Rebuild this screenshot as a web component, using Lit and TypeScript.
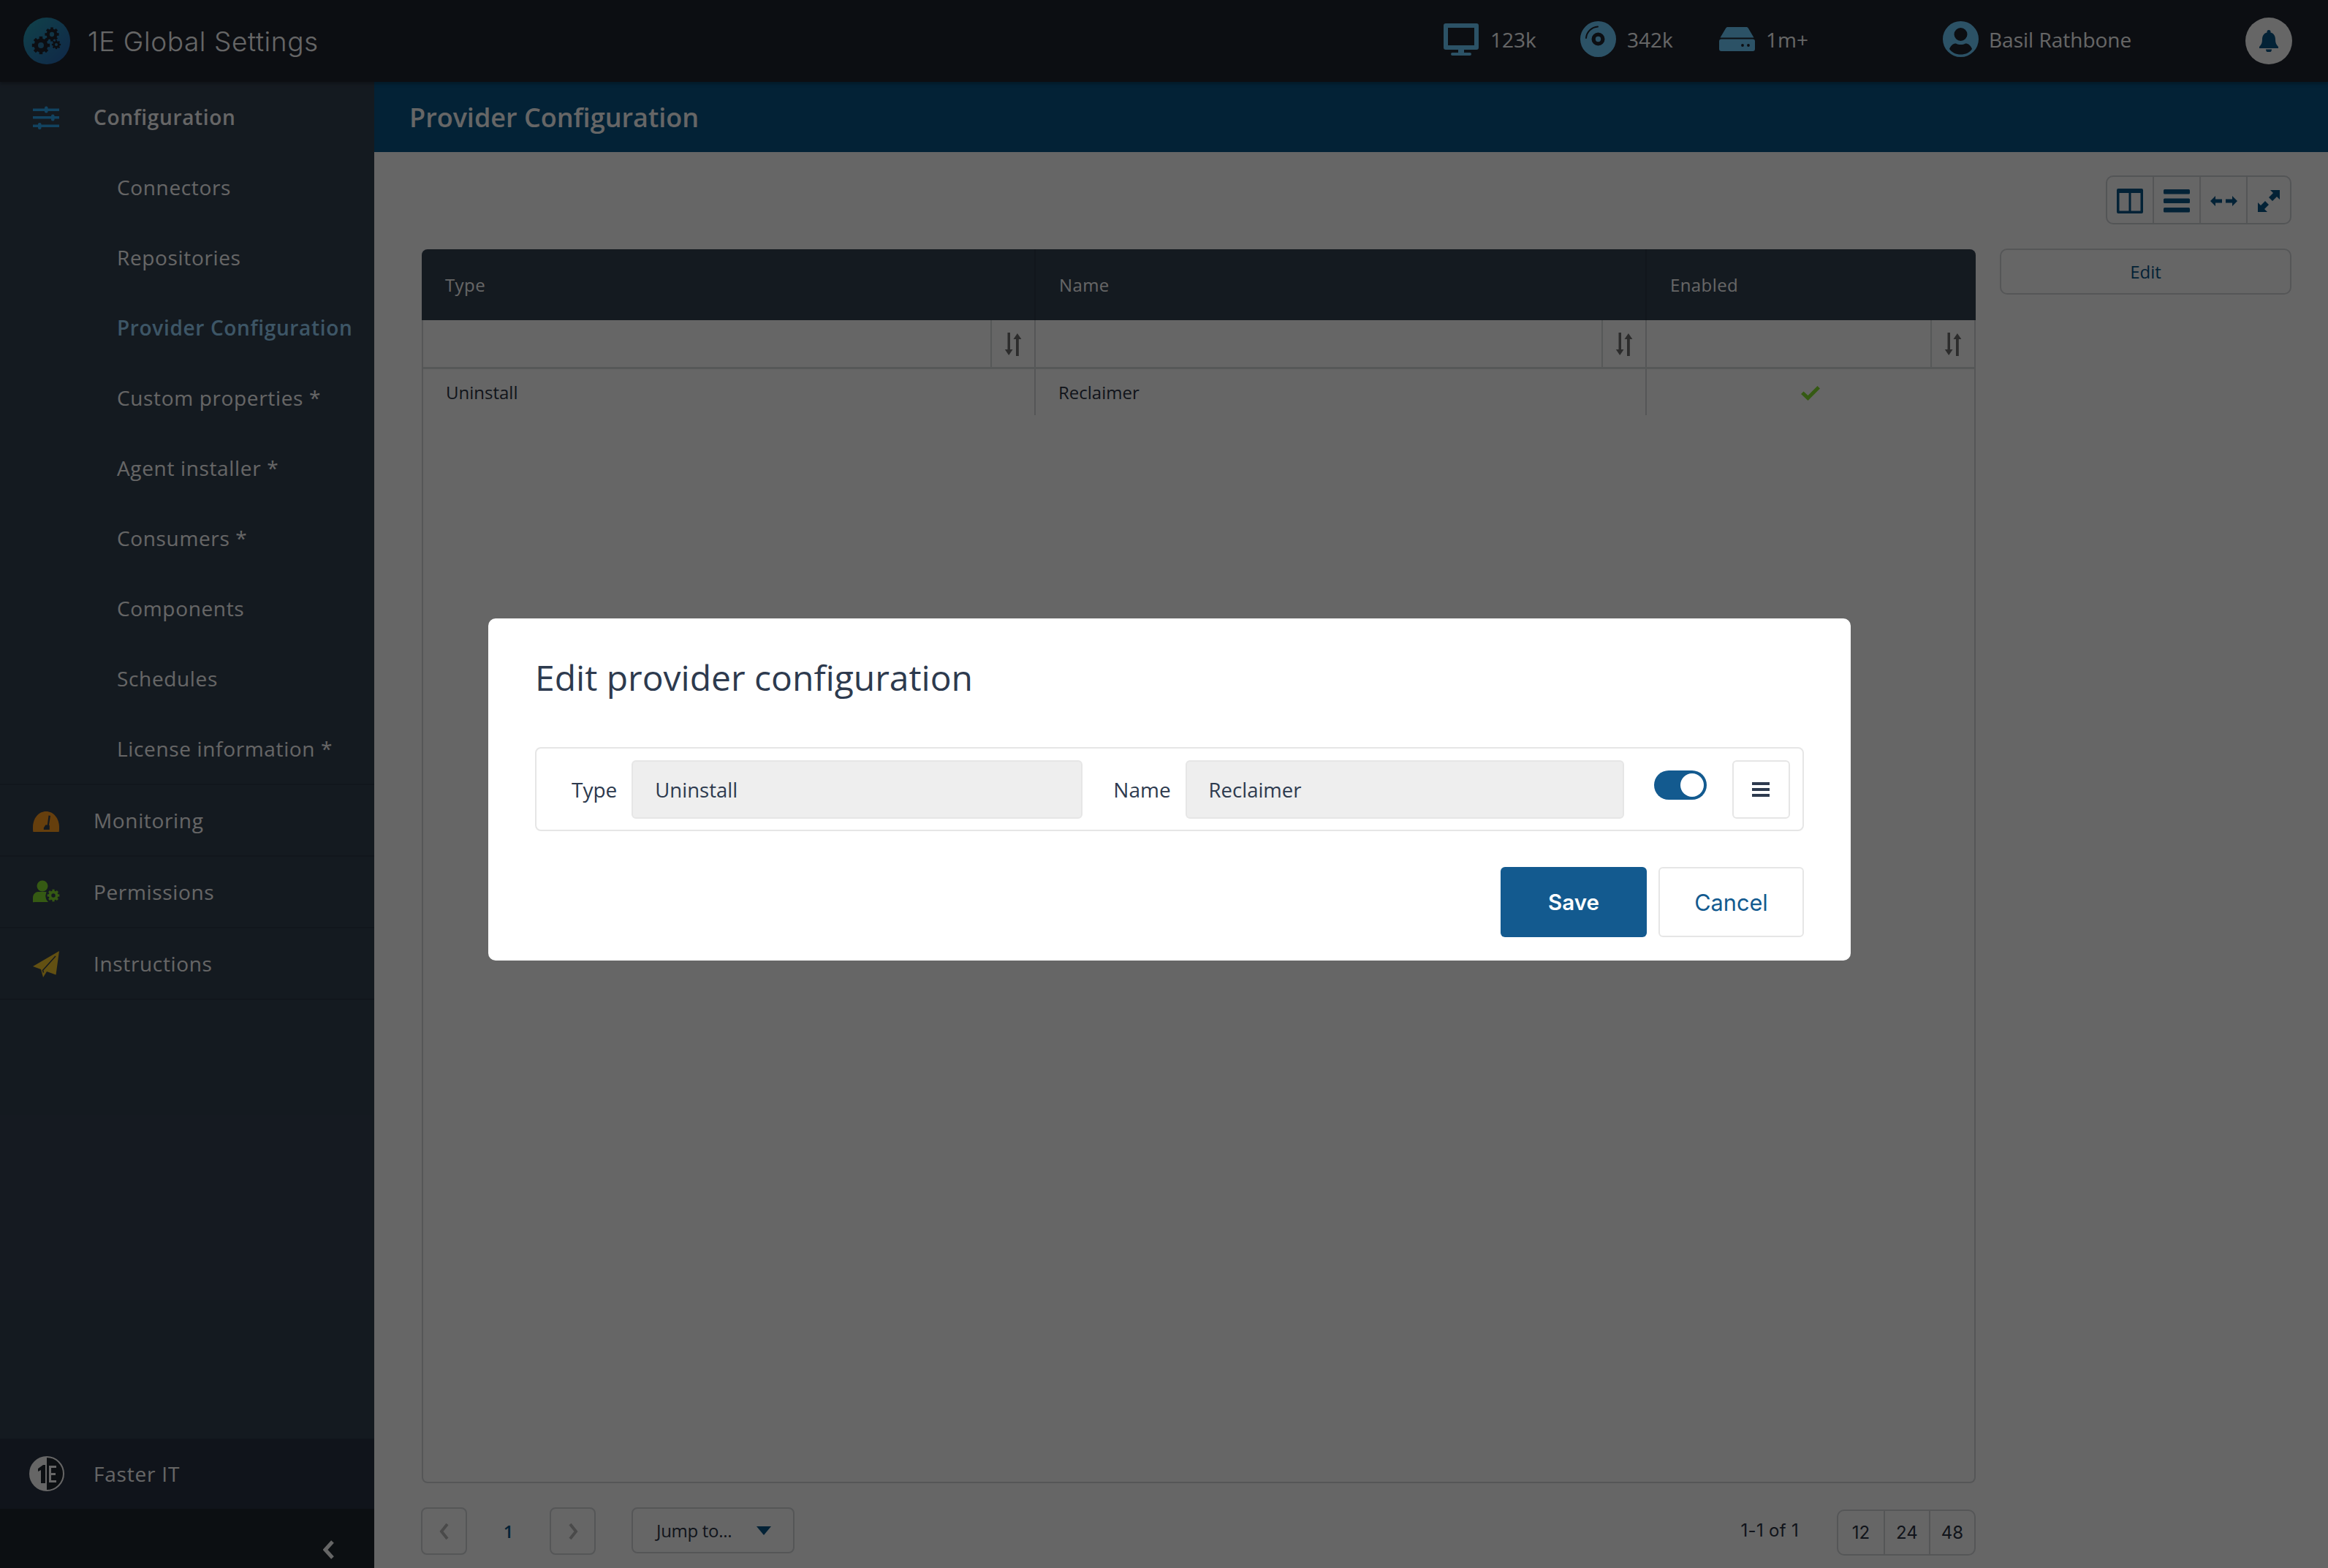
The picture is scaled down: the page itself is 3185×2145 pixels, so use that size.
import { LitElement, html, css, svg } from "lit";
import { customElement } from "lit/decorators.js";

const gear = (cx: number, cy: number, r: number, fill: string, hole: string) => {
  const teeth = [0, 45, 90, 135, 180, 225, 270, 315].map(
    (a) => svg`<rect x=${cx - r * 0.24} y=${cy - r * 1.28} width=${r * 0.48} height=${r * 0.6} fill=${fill} transform="rotate(${a} ${cx} ${cy})"/>`
  );
  return svg`${teeth}<circle cx=${cx} cy=${cy} r=${r} fill=${fill}/><circle cx=${cx} cy=${cy} r=${r * 0.42} fill=${hole}/>`;
};

const sort = html`<svg class="sort" viewBox="0 0 24 32"><path d="M4.5 0h3.5v23h3.500L6.200 31 .8 23h3.700zM16 32h3.800V9h3.600L17.900 1l-5.400 8H16z" fill="#6f6f6f"/></svg>`;

const subItems = ["Connectors", "Repositories", "Provider Configuration", "Custom properties *", "Agent installer *", "Consumers *", "Components", "Schedules", "License information *"];

@customElement("app-root")
export class AppRoot extends LitElement {
  static styles = css`
    :host { display: block; width: 3185px; height: 2145px; position: relative; overflow: hidden; background: #fff; font-family: "Open Sans", sans-serif; }
    * { box-sizing: border-box; }
    svg { display: block; flex: none; }
    .header { height: 112px; background: #1e232f; display: flex; align-items: center; color: #fff; position: relative; z-index: 2; box-shadow: 0 3px 4px rgba(0,0,0,.25); }
    .logo { width: 64px; height: 64px; margin-left: 32px; }
    .brand { margin-left: 24px; font: 300 37px "Inter", sans-serif; letter-spacing: .6px; color: #fff; }
    .stats { margin-left: auto; display: flex; align-items: center; }
    .stat { display: flex; align-items: center; font-size: 28px; gap: 14px; color: #fff; margin-bottom: 5px; }
    .stat.cpu { width: 187px; }
    .stat.disc { width: 190px; gap: 15px; }
    .stat.hdd { width: 306px; gap: 15px; }
    .stat.user { width: 414px; }
    .bell { width: 64px; height: 64px; border-radius: 50%; background: #fff; margin-right: 49px; display: flex; align-items: center; justify-content: center; }
    .body { display: flex; height: 2033px; }
    .side { width: 512px; background: #344152; display: flex; flex-direction: column; }
    .item { height: 98px; display: flex; align-items: center; color: #fff; font-size: 28px; letter-spacing: .65px; border-bottom: 2px solid #2c3746; padding-left: 43px; }
    .item svg { width: 40px; height: 40px; margin-right: 45px; }
    .item.top { height: 96px; border: 0; font-weight: 600; }
    .sub { height: 96px; display: flex; align-items: center; padding-left: 160px; color: #fff; font-size: 28px; letter-spacing: .65px; }
    .sub.active { color: #9ad8ff; font-weight: 600; }
    .sublist { border-bottom: 2px solid #2c3746; }
    .spacer { flex: 1; }
    .faster { height: 96px; background: #283244; display: flex; align-items: center; padding-left: 40px; color: #fff; font-size: 28px; letter-spacing: .8px; gap: 40px; }
    .collapse { height: 81px; background: #20262f; display: flex; justify-content: flex-end; align-items: center; padding-right: 54px; padding-top: 30px; }
    .main { flex: 1; display: flex; flex-direction: column; min-width: 0; }
    .titlebar { height: 96px; background: #085587; color: #fff; font-size: 36px; font-weight: 600; padding-left: 48px; display: flex; align-items: center; }
    .content { flex: 1; padding: 32px 50px 0 65px; display: grid; grid-template-columns: 2126px 399px; column-gap: 33px; grid-template-rows: 67px 1689px 1fr; row-gap: 33px; }
    .tools { grid-column: 1 / 3; justify-self: end; display: flex; border: 2px solid #d0d4d8; border-radius: 10px; }
    .tools div { width: 64px; padding-top: 2px; display: flex; align-items: center; justify-content: center; border-left: 2px solid #d4d7da; }
    .tools div:first-child { border-left: 0; width: 62px; }
    .tools div:last-child { width: 60px; }
    .table { border: 2px solid #d4d7da; border-top: 0; border-radius: 8px; position: relative; font-size: 24px; color: #2b3444; align-self: start; height: 1688px; margin-top: 1px; }
    .thead, .filters, .row { display: grid; grid-template-columns: 836px 836px 1fr; }
    .thead { grid-template-columns: 838px 836px 1fr; height: 97px; background: #344152; color: #fff; border-radius: 8px 8px 0 0; margin: 0 -2px; }
    .thead div { padding: 33px 0 0 32px; line-height: 32px; border-left: 2px solid #2c3746; letter-spacing: .4px; }
    .thead div:first-child { border-left: 0; }
    .filters { height: 67px; border-bottom: 3px solid #d8dbdd; }
    .filters div { display: flex; justify-content: flex-end; border-left: 2px solid #d4d7da; }
    .filters div:first-child { border-left: 0; }
    .filters span { width: 60px; padding-top: 2px; display: flex; align-items: center; justify-content: center; border-left: 2px solid #d8dbdd; }
    .row { height: 63px; }
    .row div { padding-left: 31px; display: flex; align-items: center; border-left: 2px solid #d4d7da; }
    .row div:first-child { border-left: 0; }
    .row div.check { justify-content: center; padding: 2px 0 0; }
    .sort { width: 24px; height: 32px; }
    .edit { height: 63px; border: 2px solid #d4d7da; border-radius: 10px; display: flex; align-items: center; justify-content: center; color: #085587; font-size: 24px; align-self: start; }
    .pager { grid-column: 1; display: flex; align-items: flex-start; color: #2b3444; font-size: 24px; margin-left: -1px; }
    .pbtn { width: 63px; height: 65px; border: 2px solid #d4d7da; border-radius: 8px; display: flex; align-items: center; justify-content: center; }
    .pnum { width: 113px; height: 65px; display: flex; align-items: center; justify-content: center; color: #085587; font-weight: 600; }
    .jump { width: 223px; height: 63px; margin-left: 49px; border: 2px solid #d4d7da; border-radius: 8px; display: flex; align-items: center; padding-left: 32px; letter-spacing: -.3px; }
    .jump svg { margin-left: 34px; }
    .count { margin-left: auto; font: 400 24px "Inter", sans-serif; letter-spacing: .3px; height: 62px; display: flex; align-items: center; padding-right: 52px; }
    .sizes { display: flex; height: 63px; margin-top: 3px; border: 2px solid #d4d7da; border-radius: 10px; font: 400 24px "Inter", sans-serif; }
    .sizes span { width: 62px; display: flex; align-items: center; justify-content: center; border-left: 2px solid #d4d7da; }
    .sizes span:first-child { border-left: 0; }
    .overlay { position: absolute; inset: 0; background: rgba(0,0,0,.6); z-index: 5; padding: 846px 0 0 668px; }
    .modal { width: 1864px; height: 468px; background: #fff; border-radius: 10px; padding: 0 64px; color: #2d3a4e; }
    .modal h2 { margin: 0; font-weight: 400; font-size: 48px; line-height: 80px; padding-top: 41px; height: 176px; }
    .fields { height: 115px; border: 2px solid #e6e6e6; border-radius: 8px; display: flex; align-items: center; padding-left: 48px; font-size: 28px; }
    .input { height: 80px; background: #eee; border: 2px solid #e6e6e6; border-radius: 6px; display: flex; align-items: center; padding: 2px 0 0 30px; font-size: 27.5px; }
    .input.a { width: 617px; margin-left: 20px; margin-right: 42px; }
    .input.b { width: 600px; margin-left: 20px; margin-right: 41px; }
    .toggle { width: 72px; height: 40px; margin-top: -12px; border-radius: 20px; background: #135a8f; display: flex; justify-content: flex-end; align-items: center; padding-right: 4px; }
    .toggle i { width: 32px; height: 32px; border-radius: 50%; background: #fff; }
    .menu { width: 79px; height: 80px; margin-left: 35px; border: 2px solid #e6e6e6; border-radius: 6px; display: flex; align-items: center; justify-content: center; }
    .actions { display: flex; justify-content: flex-end; gap: 16px; margin-top: 49px; }
    .btn { width: 200px; height: 96px; border-radius: 6px; display: flex; align-items: center; justify-content: center; font: 400 30.700px "Inter", sans-serif; }
    .save { background: #135a8f; color: #fff; font-weight: 600; font-size: 29.500px; }
    .cancel { width: 199px; border: 2px solid #e6e6e6; color: #135a8f; }
  `;

  render() {
    return html`
      <div class="header">
        <svg class="logo" viewBox="0 0 64 64">
          <defs><linearGradient id="lg" x1="0" y1="0" x2="1" y2="1"><stop offset="0" stop-color="#2aa5b8"/><stop offset="1" stop-color="#2a62b4"/></linearGradient></defs>
          <circle cx="32" cy="32" r="32" fill="url(#lg)"/>
          ${gear(24, 38, 9.5, "#1e232f", "#2e7aa8")}
          ${gear(39, 23, 7.5, "#1e232f", "#2b86ae")}
          ${gear(45, 37, 4.8, "#1e232f", "#2b7cb0")}
        </svg>
        <div class="brand">1E Global Settings</div>
        <div class="stats">
          <div class="stat cpu"><svg width="50" height="44" viewBox="0 0 50 44"><path fill-rule="evenodd" d="M3 0h42a3 3 0 0 1 3 3v30a3 3 0 0 1-3 3H28v4h8a2 2 0 0 1 0 4H12a2 2 0 0 1 0-4h8v-4H3a3 3 0 0 1-3-3V3a3 3 0 0 1 3-3zm3 6v24h36V6z" fill="#6fcdff"/></svg>123k</div>
          <div class="stat disc"><svg width="49" height="49" viewBox="0 0 49 49"><path fill-rule="evenodd" d="M24.500 0a24.500 24.500 0 1 1 0 49 24.500 24.500 0 0 1 0-49zm0 15.500a9 9 0 1 0 0 18 9 9 0 0 0 0-18zm0 5.300a3.700 3.700 0 1 1 0 7.400 3.700 3.700 0 0 1 0-7.400z" fill="#6fcdff"/><path d="M8 23A17 17 0 0 1 24 7.500" stroke="#1e232f" stroke-width="2" fill="none" stroke-linecap="round"/></svg>342k</div>
          <div class="stat hdd"><svg width="49" height="33" viewBox="0 0 49 33"><path d="M11 0h27l1.500 1L47.500 14.500H1.500L9.500 1zM3 16.500h43a3 3 0 0 1 3 3V30a3 3 0 0 1-3 3H3a3 3 0 0 1-3-3V19.500a3 3 0 0 1 3-3z" fill="#6fcdff"/><circle cx="32" cy="25" r="1.900" fill="#1e232f"/><circle cx="40" cy="25" r="1.900" fill="#1e232f"/></svg>1m+</div>
          <div class="stat user"><svg width="49" height="49" viewBox="0 0 49 49"><path fill-rule="evenodd" d="M24.500 0a24.500 24.500 0 1 1 0 49 24.500 24.500 0 0 1 0-49zm0 9a9 9 0 1 0 0 18 9 9 0 0 0 0-18zM9 38c3.500 5 9 7.500 15.500 7.500S37 43 40 38c-2-5-5-7.500-9-7.500-2 1-4 1.500-6.500 1.500S20 31.500 18 30.500C14 30.500 11 33 9 38z" fill="#6fcdff"/></svg>Basil Rathbone</div>
          <div class="bell"><svg width="26" height="30" viewBox="0 0 26 30"><path d="M13 0a2.500 2.500 0 0 1 2.500 2.500v1C20 4.600 22 8.500 22 13c0 4.500 1 7 4 10v2H0v-2c3-3 4-5.500 4-10 0-4.500 2-8.400 6.500-9.500v-1A2.500 2.500 0 0 1 13 0zM9 26.500h8a4 4 0 0 1-8 0z" fill="#085587"/></svg></div>
        </div>
      </div>
      <div class="body">
        <div class="side">
          <div class="item top">
            <svg viewBox="0 0 40 40"><path d="M2 8.500h36v3.500H2zM2 19h36v3.500H2zM2 30.500h36V34H2z" fill="#2ea8f0"/><rect x="18" y="5.500" width="4.500" height="9" rx="2" fill="#2ea8f0"/><rect x="27" y="16.500" width="4.500" height="9" rx="2" fill="#2ea8f0"/><rect x="9" y="28" width="4.500" height="9" rx="2" fill="#2ea8f0"/></svg>
            Configuration
          </div>
          <div class="sublist">
            ${subItems.map((s) => html`<div class="sub ${s === "Provider Configuration" ? "active" : ""}">${s}</div>`)}
          </div>
          <div class="item">
            <svg viewBox="0 0 40 40"><path d="M2.500 36C2 35 2 33 2 30 2 17 10 8 20 8s18 9 18 22c0 3 0 5-.5 6z" fill="#ff9d22"/><path d="M23.500 13.500 26 14l-2 12.500.8 1v5.500h-8v-2.500l2.500-4h2.500z" fill="#344152"/></svg>
            Monitoring
          </div>
          <div class="item">
            <svg viewBox="0 0 40 40"><circle cx="15" cy="12" r="7.500" fill="#85e030"/><path d="M2 34v-6c0-5 4-8 7-8h13c-3 3-4 9 1 14H4a2 2 0 0 1-2 0z" fill="#85e030"/><circle cx="30" cy="25" r="10.500" fill="#344152"/>${gear(30, 25, 6.5, "#85e030", "#344152")}</svg>
            Permissions
          </div>
          <div class="item">
            <svg viewBox="0 0 40 40"><path d="M38 3 33.500 35.500 21 31l-5 8-3-11L2 24z" fill="#f5c82e"/><path d="M33 10 15.500 29.500l1 3" fill="none" stroke="#344152" stroke-width="1.500"/></svg>
            Instructions
          </div>
          <div class="spacer"></div>
          <div class="faster">
            <svg width="48" height="48" viewBox="0 0 48 48"><circle cx="24" cy="24" r="23" fill="#20262f" stroke="#fff" stroke-width="2"/><path d="M24 1a23 23 0 0 0 0 46z" fill="#fff"/><path d="M12 17l7-5h3v25h-6V19l-4 2zM26 12h12v5h-7v5h6v5h-6v5h7v5H26z" fill="#20262f"/><path d="M27 13h10v3h-7v7h6v3h-6v7h7v3H27z" fill="#fff"/></svg>
            Faster IT
          </div>
          <div class="collapse"><svg width="16" height="26" viewBox="0 0 16 26"><path d="M13 2 3 13l10 11" fill="none" stroke="#fff" stroke-width="5"/></svg></div>
        </div>
        <div class="main">
          <div class="titlebar">Provider Configuration</div>
          <div class="content">
            <div class="tools">
              <div><svg width="36" height="34" viewBox="0 0 36 34"><path fill-rule="evenodd" d="M2 0h32a2 2 0 0 1 2 2v30a2 2 0 0 1-2 2H2a2 2 0 0 1-2-2V2a2 2 0 0 1 2-2zm1.500 6v24.500h13V6zm16 0v24.500h13V6z" fill="#085587"/></svg></div>
              <div><svg width="36" height="32" viewBox="0 0 36 32"><rect width="36" height="6.500" rx="1.500" fill="#085587"/><rect y="12.500" width="36" height="6.500" rx="1.500" fill="#085587"/><rect y="25" width="36" height="6.500" rx="1.500" fill="#085587"/></svg></div>
              <div><svg width="37" height="14" viewBox="0 0 37 14"><path d="M0 7l7-7v4.500h9v5H7V14zM37 7l-7-7v4.500h-9v5h9V14z" fill="#085587"/></svg></div>
              <div><svg width="30" height="30" viewBox="0 0 30 30"><path d="M17 0h13v13l-4-4-6 6-5-5 6-6zM0 30V17l4 4 6-6 5 5-6 6 4 4z" fill="#085587"/></svg></div>
            </div>
            <div class="table">
              <div class="thead"><div>Type</div><div>Name</div><div>Enabled</div></div>
              <div class="filters"><div><span>${sort}</span></div><div><span>${sort}</span></div><div><span>${sort}</span></div></div>
              <div class="row"><div>Uninstall</div><div>Reclaimer</div><div class="check"><svg width="26" height="20" viewBox="0 0 26 20"><path d="M9.500 20 0 11l3.500-3.500 6 5.500L22.500 0 26 3.500z" fill="#85e030"/></svg></div></div>
            </div>
            <div class="edit">Edit</div>
            <div class="pager">
              <div class="pbtn"><svg width="14" height="24" viewBox="0 0 14 24"><path d="M11 2 3 12l8 10" fill="none" stroke="#b8b8b8" stroke-width="4"/></svg></div>
              <div class="pnum">1</div>
              <div class="pbtn"><svg width="14" height="24" viewBox="0 0 14 24"><path d="M3 2l8 10-8 10" fill="none" stroke="#b8b8b8" stroke-width="4"/></svg></div>
              <div class="jump">Jump to...<svg width="20" height="12" viewBox="0 0 20 12"><path d="M0 0h20L10 12z" fill="#085587"/></svg></div>
              <div class="count">1-1 of 1</div>
              <div class="sizes"><span>12</span><span>24</span><span>48</span></div>
            </div>
          </div>
        </div>
      </div>
      <div class="overlay">
        <div class="modal">
          <h2>Edit provider configuration</h2>
          <div class="fields">
            <span>Type</span><div class="input a">Uninstall</div>
            <span>Name</span><div class="input b">Reclaimer</div>
            <div class="toggle"><i></i></div>
            <div class="menu"><svg width="24" height="20" viewBox="0 0 24 20"><path d="M0 0h24v4H0zM0 8h24v4H0zM0 16h24v4H0z" fill="#2d3a4e"/></svg></div>
          </div>
          <div class="actions"><div class="btn save">Save</div><div class="btn cancel">Cancel</div></div>
        </div>
      </div>
    `;
  }
}
